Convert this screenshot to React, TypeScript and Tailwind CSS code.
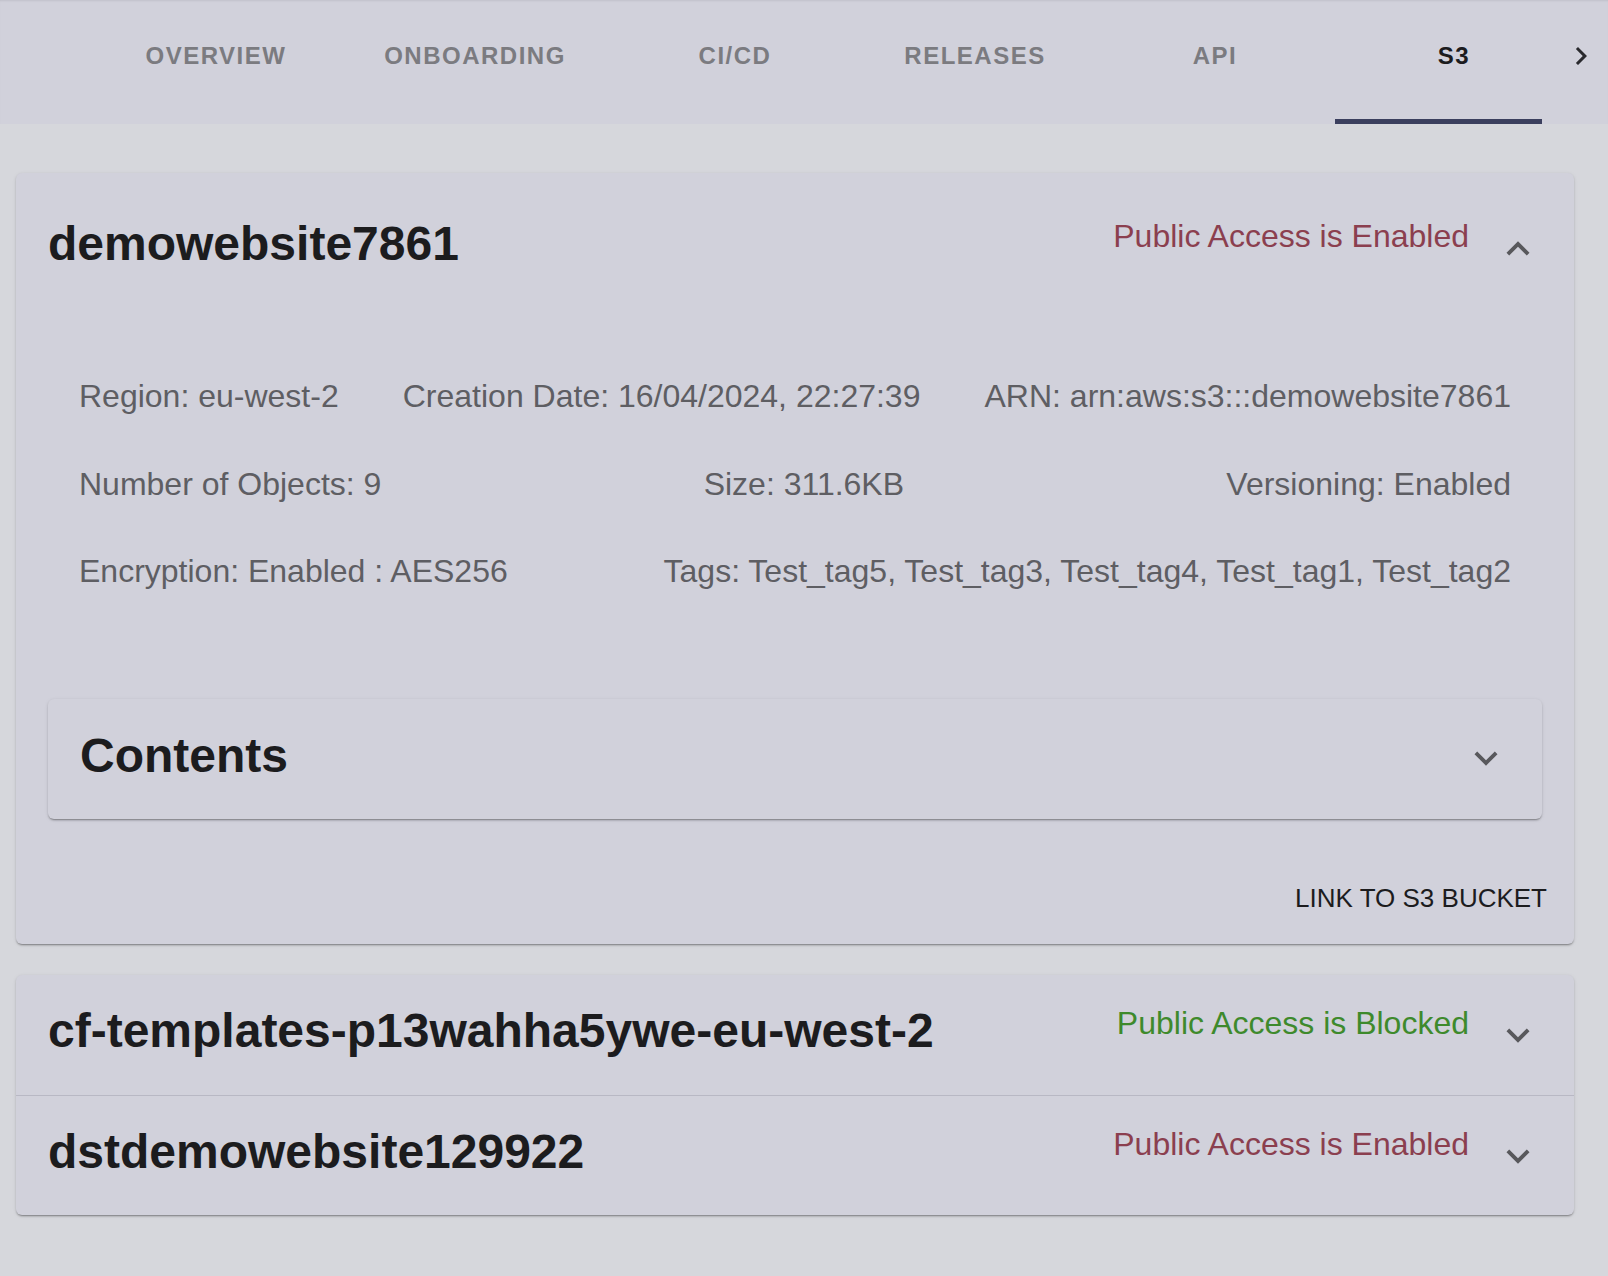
import React from "react";

const ExpandMore = ({ className }: { className?: string }) => (
  <svg viewBox="0 0 24 24" className={className} fill="currentColor">
    <path d="M16.59 8.59 12 13.17 7.41 8.59 6 10l6 6 6-6z" />
  </svg>
);

const ExpandLess = ({ className }: { className?: string }) => (
  <svg viewBox="0 0 24 24" className={className} fill="currentColor">
    <path d="M12 8l-6 6 1.41 1.41L12 10.83l4.59 4.58L18 14z" />
  </svg>
);

const ArrowRight = ({ className }: { className?: string }) => (
  <svg viewBox="0 0 24 24" className={className} fill="currentColor">
    <path d="M8.59 16.59 13.17 12 8.59 7.41 10 6l6 6-6 6z" />
  </svg>
);

const shadow =
  "shadow-[0_2px_2px_-1px_rgba(0,0,0,0.32),0_1px_2px_0_rgba(0,0,0,0.10),0_1px_4px_0_rgba(0,0,0,0.08)]";

function CollapsedRow({
  name,
  status,
  blocked,
  border,
}: {
  name: string;
  status: string;
  blocked?: boolean;
  border?: boolean;
}) {
  return (
    <div
      className={
        "flex items-start h-[120px] pt-[28px] pl-[32px] pr-[33px] " +
        (border ? "border-t border-[#b8b8c4]" : "")
      }
    >
      <div className="flex-1 text-[48px] leading-[56px] font-bold text-[#1c1c1e]">
        {name}
      </div>
      <div
        className={
          "text-[32px] leading-[40px] " +
          (blocked ? "text-[#3e8a2c]" : "text-[#8b3f4f]")
        }
      >
        {status}
      </div>
      <ExpandMore className="ml-[26px] mt-[9px] w-[46px] h-[46px] text-[#58585c]" />
    </div>
  );
}

export default function App() {
  const tabs = [
    { label: "OVERVIEW", cls: "ml-[116px]" },
    { label: "ONBOARDING", cls: "ml-[59px]" },
    { label: "CI/CD", cls: "ml-[60px]" },
    { label: "RELEASES", cls: "ml-[40px]" },
    { label: "API", cls: "ml-[40px]" },
    { label: "S3", cls: "ml-[39px]", active: true },
  ];
  return (
    <div className="min-h-screen bg-[#d6d7dc] font-['Liberation_Sans',Arial,sans-serif]">
      <div className="relative h-[124px] bg-[#d1d1db] shadow-[inset_0_2px_2px_-1px_rgba(0,0,0,0.08)]">
        <div className="flex items-center h-[111px]">
          {tabs.map((t) => (
            <div
              key={t.label}
              className={
                "w-[200px] text-center text-[24px] leading-[28px] font-bold tracking-[1.5px] " +
                t.cls +
                " " +
                (t.active ? "text-[#1c1c1e]" : "text-[#7b7b80]")
              }
            >
              {t.label}
            </div>
          ))}
          <ArrowRight className="ml-[9px] w-[36px] h-[36px] text-[#2a2a2e]" />
        </div>
        <div className="absolute left-[1335px] bottom-0 w-[207px] h-[5px] bg-[#3b3f5e]" />
      </div>

      <div className="pt-[49px] pl-[16px] pr-[34px] pb-[58px]">
        <div className={"bg-[#d1d1db] rounded-[6px] " + shadow}>
          <div className="flex items-start pt-[43px] pl-[32px] pr-[33px]">
            <div className="flex-1 text-[48px] leading-[56px] font-bold text-[#1c1c1e]">
              demowebsite7861
            </div>
            <div className="text-[32px] leading-[40px] text-[#8b3f4f]">
              Public Access is Enabled
            </div>
            <ExpandLess className="ml-[26px] mt-[10px] w-[46px] h-[46px] text-[#58585c]" />
          </div>

          <div className="mt-[104px] pl-[63px] pr-[63px] flex flex-col gap-[47.5px] text-[32px] leading-[40px] text-[#5e5e63]">
            <div className="flex justify-between">
              <span>Region: eu-west-2</span>
              <span>Creation Date: 16/04/2024, 22:27:39</span>
              <span>ARN: arn:aws:s3:::demowebsite7861</span>
            </div>
            <div className="flex justify-between">
              <span>Number of Objects: 9</span>
              <span>Size: 311.6KB</span>
              <span>Versioning: Enabled</span>
            </div>
            <div className="flex justify-between">
              <span>Encryption: Enabled : AES256</span>
              <span>Tags: Test_tag5, Test_tag3, Test_tag4, Test_tag1, Test_tag2</span>
            </div>
          </div>

          <div
            className={
              "mt-[108px] mx-[32px] h-[120px] bg-[#d1d1db] rounded-[6px] flex items-start pt-[29px] pl-[32px] pr-[33px] " +
              shadow
            }
          >
            <div className="flex-1 text-[48px] leading-[56px] font-bold text-[#1c1c1e]">
              Contents
            </div>
            <ExpandMore className="mt-[7px] w-[46px] h-[46px] text-[#58585c]" />
          </div>

          <div className="mt-[63px] pb-[30px] pr-[27px] flex justify-end">
            <span className="text-[26px] leading-[32px] text-[#1c1c1e]">
              LINK TO S3 BUCKET
            </span>
          </div>
        </div>

        <div className={"mt-[31px] bg-[#d1d1db] rounded-[6px] " + shadow}>
          <CollapsedRow
            name="cf-templates-p13wahha5ywe-eu-west-2"
            status="Public Access is Blocked"
            blocked
          />
          <CollapsedRow
            name="dstdemowebsite129922"
            status="Public Access is Enabled"
            border
          />
        </div>
      </div>
    </div>
  );
}
